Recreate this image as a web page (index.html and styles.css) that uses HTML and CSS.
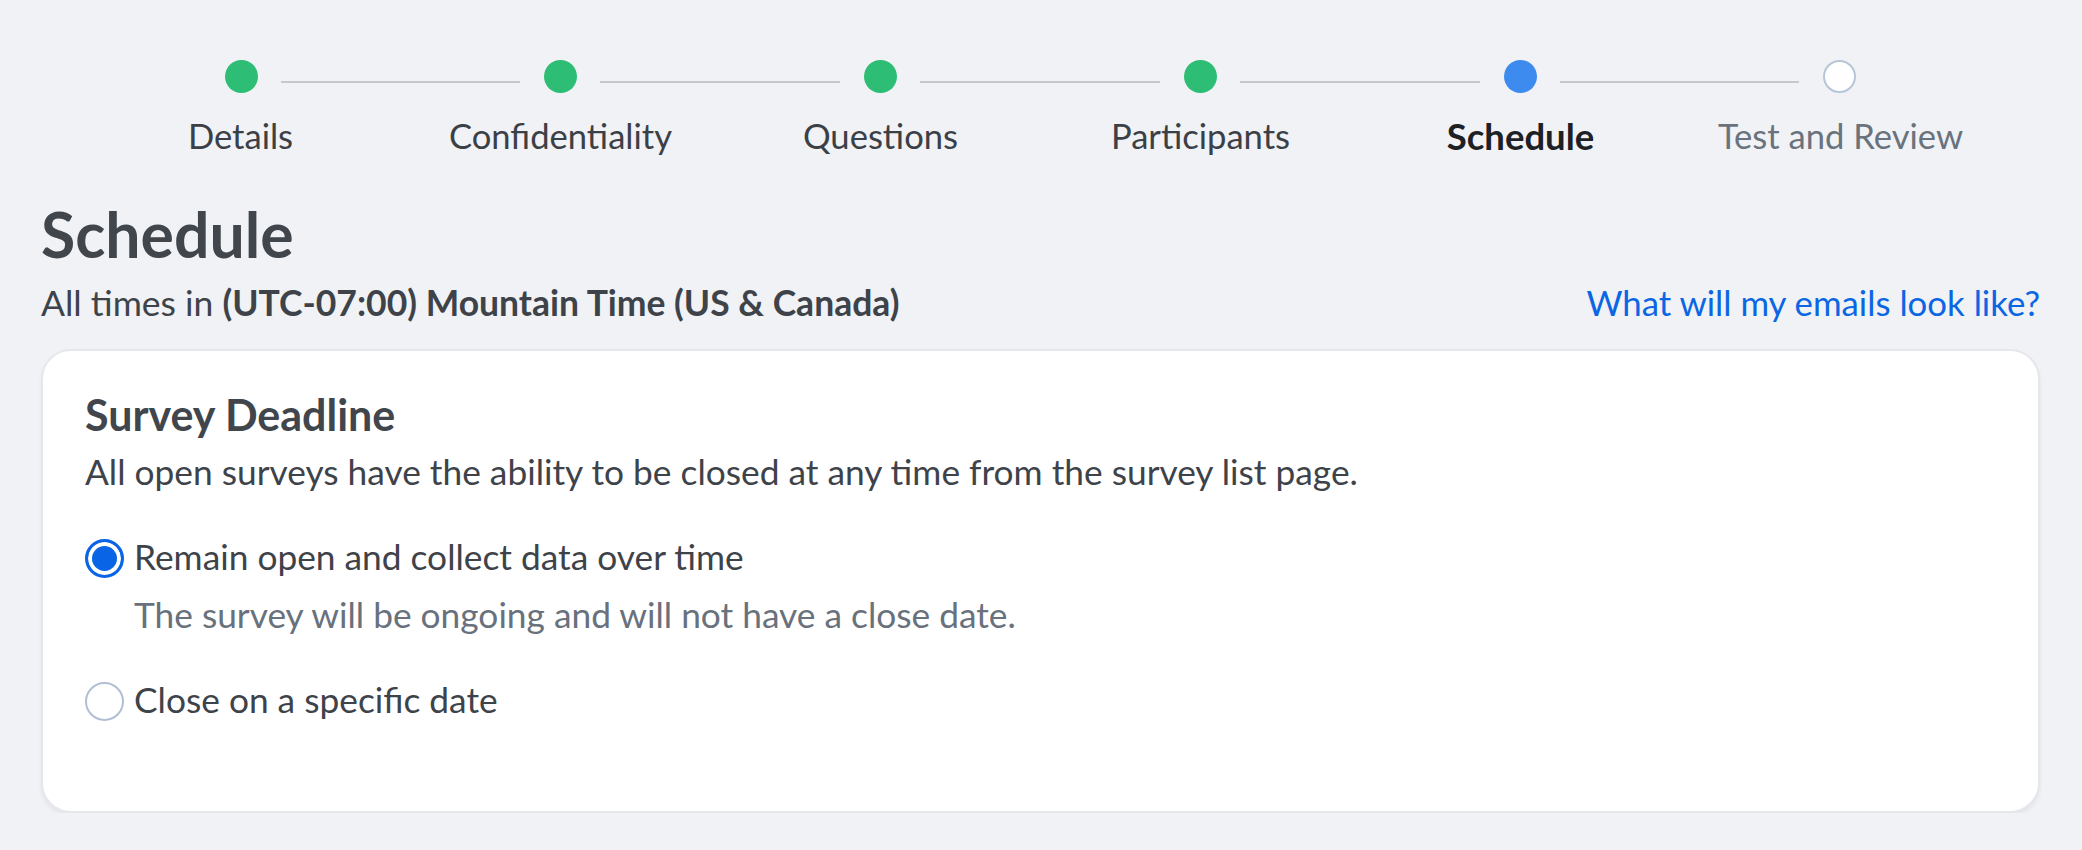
FILE: index.html
```html
<!DOCTYPE html>
<html lang="en">
<head>
<meta charset="utf-8">
<title>Schedule</title>
<link rel="stylesheet" href="styles.css">
</head>
<body>
<div class="page">
  <nav class="stepper">
    <div class="track">
      <span class="dot done"></span><span class="line"></span>
      <span class="dot done"></span><span class="line"></span>
      <span class="dot done"></span><span class="line"></span>
      <span class="dot done"></span><span class="line"></span>
      <span class="dot current"></span><span class="line"></span>
      <span class="dot todo"></span>
    </div>
    <div class="labels">
      <span class="label">Details</span>
      <span class="label">Confidentiality</span>
      <span class="label">Questions</span>
      <span class="label">Participants</span>
      <span class="label active">Schedule</span>
      <span class="label future">Test and Review</span>
    </div>
  </nav>

  <h1 class="title">Schedule</h1>
  <div class="subhead">
    <p class="tz">All times in <strong>(UTC-07:00) Mountain Time (US &amp; Canada)</strong></p>
    <a class="link" href="#">What will my emails look like?</a>
  </div>

  <section class="card">
    <h2 class="card-title">Survey Deadline</h2>
    <p class="card-desc">All open surveys have the ability to be closed at any time from the survey list page.</p>
    <div class="option">
      <span class="radio checked"></span>
      <span class="opt-label">Remain open and collect data over time</span>
    </div>
    <p class="opt-help">The survey will be ongoing and will not have a close date.</p>
    <div class="option second">
      <span class="radio"></span>
      <span class="opt-label">Close on a specific date</span>
    </div>
  </section>
</div>
</body>
</html>
```

FILE: styles.css
```css
* { box-sizing: border-box; }
html, body { margin: 0; padding: 0; }
body {
  background: #f0f2f5;
  font-family: "Lato", "Open Sans", "Liberation Sans", sans-serif;
  color: #3e434a;
}
.page {
  padding: 0 42px 0 41px;
}

/* Stepper */
.stepper {
  width: 1920px;
  margin: 0 auto;
  padding-top: 60px;
}
.track {
  display: flex;
  align-items: flex-start;
  padding: 0 144px;
}
.dot {
  width: 33px;
  height: 33px;
  border-radius: 50%;
  flex: none;
}
.dot.done { background: #2ebd74; }
.dot.current { background: #3e8bef; }
.dot.todo { background: #ffffff; border: 2px solid #b7c5d8; }
.line {
  flex: 1;
  height: 2px;
  margin: 21px 24px 0 23px;
  background: #c4c7cb;
}
.labels {
  display: grid;
  grid-template-columns: repeat(6, 1fr);
  margin-top: 23px;
}
.label {
  text-align: center;
  font-size: 34.6px;
  line-height: 40px;
  color: #3b4047;
}
.label.active { font-weight: 700; color: #1d2024; font-size: 36.5px; }
.label.future { color: #69727d; }

/* Heading */
.title {
  margin: 41px 0 0 0;
  font-size: 62.5px;
  line-height: 74px;
  font-weight: 700;
  color: #41464d;
}
.subhead {
  display: flex;
  justify-content: space-between;
  align-items: baseline;
  margin-top: 11px;
}
.tz {
  margin: 0;
  font-size: 35.5px;
  line-height: 42px;
  color: #3e434a;
}
.tz strong { font-weight: 700; }
.link {
  font-size: 34.8px;
  line-height: 42px;
  color: #0b66e4;
  text-decoration: none;
}

/* Card */
.card {
  margin-top: 25px;
  background: #ffffff;
  border: 2px solid #e5e7eb;
  border-radius: 30px;
  box-shadow: 0 3px 4px rgba(30, 40, 60, 0.06);
  padding: 39px 42px 90px 42px;
}
.card-title {
  margin: 0;
  font-size: 43px;
  line-height: 50px;
  font-weight: 700;
  color: #41464d;
}
.card-desc {
  margin: 11px 0 0 0;
  font-size: 35.3px;
  line-height: 42px;
  color: #3e434a;
}
.option {
  display: flex;
  align-items: center;
  gap: 10px;
  margin-top: 43px;
}
.option.second { margin-top: 43px; }
.radio {
  flex: none;
  width: 39px;
  height: 39px;
  margin-top: 3px;
  border-radius: 50%;
  border: 2px solid #b0bfd3;
  background: #ffffff;
}
.radio.checked {
  border: 3px solid #0a64e6;
  box-shadow: inset 0 0 0 4px #ffffff;
  background: #0a64e6;
}
.opt-label {
  font-size: 35.3px;
  line-height: 42px;
  color: #3e434a;
}
.opt-help {
  margin: 16px 0 0 49px;
  font-size: 35.3px;
  line-height: 42px;
  color: #68717c;
}
```
